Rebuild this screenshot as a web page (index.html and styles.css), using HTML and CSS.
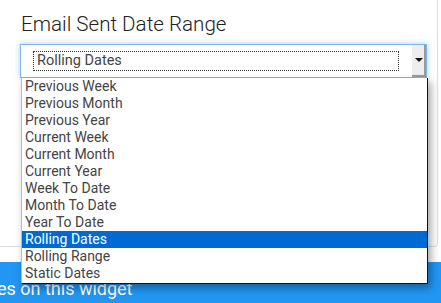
FILE: index.html
```html
<!DOCTYPE html>
<html lang="en">
<head>
    <meta charset="UTF-8">
    <meta name="viewport" content="width=device-width, initial-scale=1.0">
    <title>Email Sent Date Range</title>
    <link rel="stylesheet" href="styles.css">
</head>
<body>
    <div class="panel">
        <h2 class="title">Email Sent Date Range</h2>
        <div class="select-wrap">
            <div class="select">
                <span class="select-value">Rolling Dates</span>
                <span class="select-btn"><span class="arrow"></span></span>
            </div>
            <ul class="options">
                <li>Previous Week</li>
                <li>Previous Month</li>
                <li>Previous Year</li>
                <li>Current Week</li>
                <li>Current Month</li>
                <li>Current Year</li>
                <li>Week To Date</li>
                <li>Month To Date</li>
                <li>Year To Date</li>
                <li class="selected">Rolling Dates</li>
                <li>Rolling Range</li>
                <li>Static Dates</li>
            </ul>
        </div>
    </div>
    <div class="bar">es on this widget</div>
</body>
</html>
```

FILE: styles.css
```css
* {
    margin: 0;
    padding: 0;
    box-sizing: border-box;
}

body {
    font-family: Roboto, 'Liberation Sans', sans-serif;
    background: #ffffff;
    color: #333333;
    width: 441px;
    height: 303px;
    overflow: hidden;
}

.panel {
    width: 438px;
    height: 247px;
    border-right: 1px solid #dddddd;
    border-bottom: 1px solid #dddddd;
    border-bottom-right-radius: 4px;
    padding: 11px 0 0 20px;
}

.title {
    font-size: 20.6px;
    font-weight: 300;
    line-height: 26px;
    color: #222222;
    margin-left: 1px;
    margin-bottom: 7px;
}

.select-wrap {
    position: relative;
    width: 407px;
}

.select {
    height: 34px;
    border: 1px solid #7fb6e8;
    box-shadow: 0 0 6px rgba(102, 175, 233, 0.6);
    background: #ffffff;
    display: flex;
    align-items: stretch;
    padding: 6px 0 6px 12px;
}

.select-value {
    width: 366px;
    border: 1px dotted #333333;
    font-size: 14.5px;
    line-height: 18px;
    padding-left: 3px;
    color: #444444;
}

.select-btn {
    margin-left: auto;
    margin-top: -6px;
    margin-bottom: -6px;
    width: 14px;
    background: #eeeeee;
    border-right: 2px solid #9a9a9a;
    border-bottom: 2px solid #9a9a9a;
    display: flex;
    align-items: center;
    justify-content: center;
}

.arrow {
    width: 0;
    height: 0;
    border-left: 4px solid transparent;
    border-right: 4px solid transparent;
    border-top: 4px solid #111111;
    margin-left: 1px;
}

.options {
    position: absolute;
    top: 34px;
    left: 1px;
    width: 407px;
    list-style: none;
    background: #ffffff;
    border-left: 1px solid #bbbbbb;
    border-right: 1px solid #111111;
    border-bottom: 1px solid #111111;
    box-shadow: 3px 4px 8px rgba(0, 0, 0, 0.35);
    padding-bottom: 1px;
    z-index: 2;
}

.options li {
    height: 17px;
    line-height: 17px;
    font-size: 14px;
    color: #444444;
    padding-left: 3px;
}

.options li.selected {
    background: #006ad4;
    color: #ffffff;
}

.bar {
    margin-top: 15px;
    height: 41px;
    background: #2196f3;
    color: #ffffff;
    font-size: 18px;
    line-height: 21px;
    padding-top: 16px;
    text-indent: -3px;
}
```
